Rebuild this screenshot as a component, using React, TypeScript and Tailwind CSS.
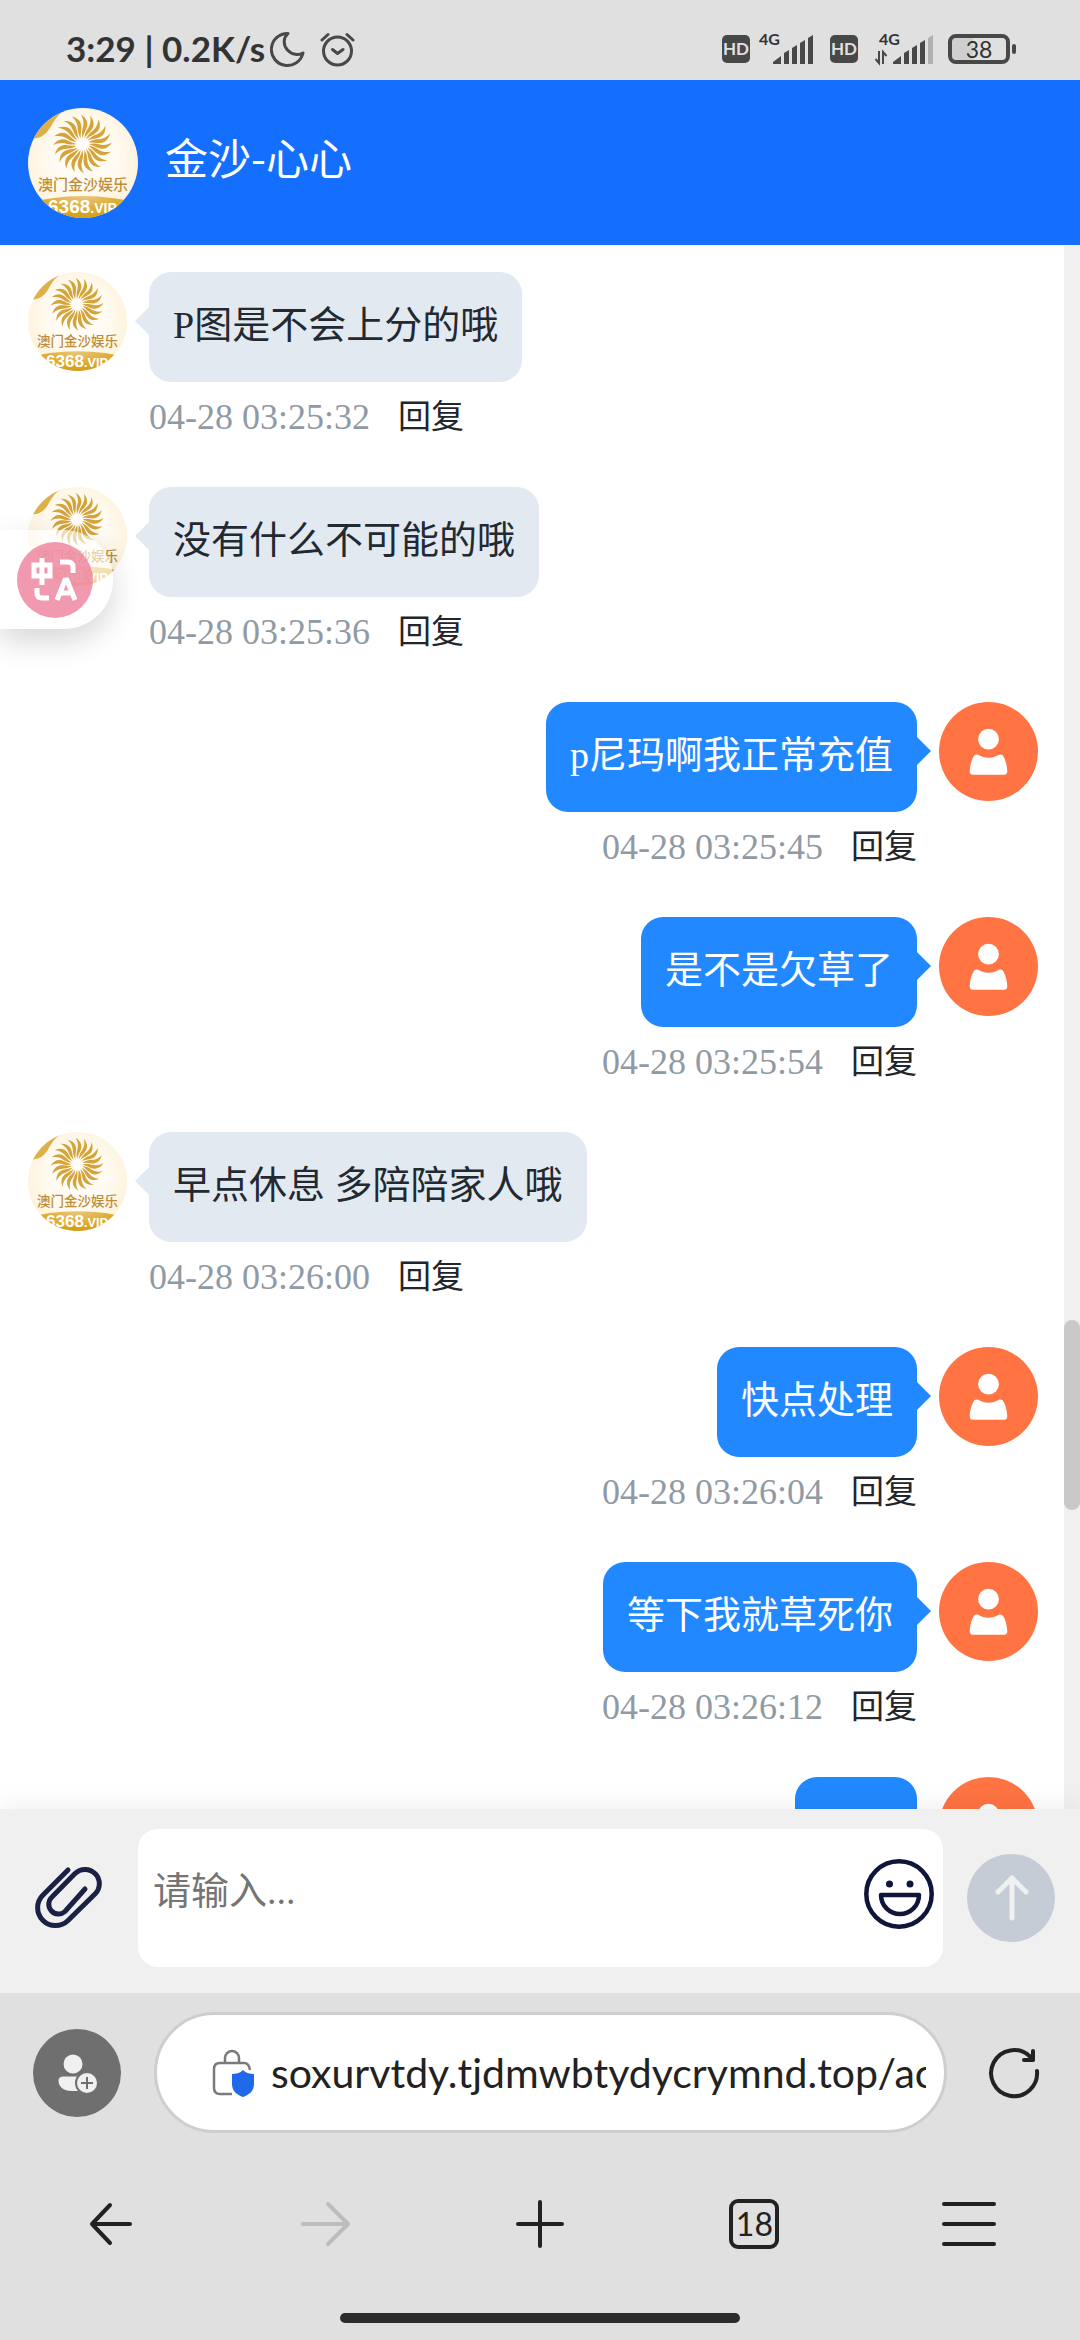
import {useState} from 'react'

const messages = [
	{id: 1, mine: false, text: 'P图是不会上分的哦', time: '04-28 03:25:32'},
	{id: 2, mine: false, text: '没有什么不可能的哦', time: '04-28 03:25:36'},
	{id: 3, mine: true, text: 'p尼玛啊我正常充值', time: '04-28 03:25:45'},
	{id: 4, mine: true, text: '是不是欠草了', time: '04-28 03:25:54'},
	{id: 5, mine: false, text: '早点休息 多陪陪家人哦', time: '04-28 03:26:00'},
	{id: 6, mine: true, text: '快点处理', time: '04-28 03:26:04'},
	{id: 7, mine: true, text: '等下我就草死你', time: '04-28 03:26:12'},
	{id: 8, mine: true, text: '', time: ''},
]

const petals = Array.from({length: 20}, (_, i) => i * 18)

const Logo = ({id, className}) => (
	<svg viewBox="0 0 110 110" className={`shrink-0 rounded-full ${className}`} aria-hidden="true">
		<defs>
			<radialGradient id={`${id}-bg`} cx="50%" cy="45%" r="60%">
				<stop offset="0" stopColor="#ffffff"/>
				<stop offset="0.55" stopColor="#fffaf0"/>
				<stop offset="1" stopColor="#fdf0d4"/>
			</radialGradient>
			<radialGradient id={`${id}-band`} cx="50%" cy="0%" r="60%">
				<stop offset="0" stopColor="#e9c680"/>
				<stop offset="0.5" stopColor="#dca61e"/>
				<stop offset="1" stopColor="#b98812"/>
			</radialGradient>
		</defs>
		<rect width="110" height="110" fill={`url(#${id}-bg)`}/>
		<path d="M0 30C10 32 17 28 22 20C27 11 31 4 42 0H0Z" fill="#deb04a"/>
		<g transform="translate(54.5 36)" fill="#d4a43a">
			{petals.map(a => (
				<path key={a} transform={`rotate(${a})`} d="M0 -6C-1 -11 -0.5 -14 0.5 -17C1.500 -21 1 -25 -1.500 -29.500C3 -26.500 5.200 -23 4.800 -19C4.200 -14.500 1.800 -12 0 -6Z"/>
			))}
		</g>
		<ellipse cx="55" cy="116" rx="80" ry="28" fill={`url(#${id}-band)`}/>
		<text x="55" y="82" fontSize="15" fontWeight="500" textAnchor="middle" fill="#bd8c35" fontFamily='"Noto Sans CJK SC", sans-serif'>澳门金沙娱乐</text>
		<text x="20" y="105" fontSize="19" fontWeight="700" fill="#fff" fontFamily='"Liberation Sans", sans-serif'>6368<tspan fontSize="14">.VIP</tspan></text>
	</svg>
)

const UserAvatar = () => (
	<svg viewBox="0 0 100 100" className="size-[99px] shrink-0 rounded-full bg-[#ff7442]" aria-hidden="true">
		<circle cx="50" cy="37.500" r="10.500" fill="#fff"/>
		<path d="M36 53.500C38 52.500 39 53 41 54C47 57 53 57 59 54C61 53 62 52.500 64 53.500C67 57 68.700 64 69 70C69 72.500 67.500 73.500 66 73.500H34C32.500 73.500 31 72.500 31 70C31.300 64 33 57 36 53.500Z" fill="#fff"/>
	</svg>
)

const Message = ({id, mine, text, time}) => (
	<li className={`flex gap-[22px] ${mine ? 'flex-row-reverse' : ''}`}>
		{mine ? <UserAvatar/> : <Logo id={`logo-${id}`} className="size-[99px]"/>}
		<div className={`flex flex-col gap-[10px] ${mine ? 'items-end' : 'items-start'}`}>
			<div className={`relative h-[110px] min-w-[122px] rounded-[22px] px-6 py-[22px] text-[38px] leading-[62px] ${mine ? 'bg-[#2288ff] text-white' : 'bg-[#e3e9f1] text-[#222930]'}`}>
				<svg viewBox="0 0 15 28" className={`absolute top-[35px] h-7 w-[15px] ${mine ? '-right-[14px] fill-[#2288ff]' : '-left-[14px] -scale-x-100 fill-[#e3e9f1]'}`} aria-hidden="true">
					<path d="M0 0H1L15 14L1 28H0Z"/>
				</svg>
				{text}
			</div>
			<div className="flex h-[50px] items-center gap-7 leading-[50px]">
				<time className="text-4xl text-[#8f9aa5]">{time}</time>
				{time && <button className="text-[33px] leading-[50px] text-[#222529]">回复</button>}
			</div>
		</div>
	</li>
)

const Bars = ({weak = false}) => (
	<g fill="#484848">
		<path d="M0 29V27L8 21V29Z"/>
		<path d="M11 29V18L16 15V29Z"/>
		<path d="M19 29V13L24 10V29Z"/>
		<path d="M27 29V8L32 5V29Z"/>
		<path d="M35 29V3L40 0V29Z" fill={weak ? '#b0b0b0' : '#484848'}/>
	</g>
)

const HD = () => (
	<span className="flex size-7 items-center justify-center rounded-[5px] bg-[#484848] text-[17px] font-bold text-[#e0e0e0]">HD</span>
)

const StatusBar = () => (
	<div className="flex h-20 shrink-0 items-center justify-between bg-[#e0e0e0] pt-[18px] pr-16 pl-[66px] font-['Lato',sans-serif]">
		<div className="flex items-center">
			<span className="w-[204px] pb-[2px] text-[35px] font-bold whitespace-nowrap text-[#333]">3:29 | 0.2K/s</span>
			<svg viewBox="0 0 36 36" className="size-9" fill="none" stroke="#484848" strokeWidth="3" strokeLinejoin="round" aria-hidden="true">
				<path d="M18 2.500A16 16 0 1 0 33 22C29 24.500 22 24 17.500 19C13 14 13 7 18 2.500Z"/>
			</svg>
			<svg viewBox="0 0 36 36" className="ml-[14px] size-9" fill="none" stroke="#484848" strokeWidth="3" strokeLinecap="round" strokeLinejoin="round" aria-hidden="true">
				<circle cx="17.500" cy="20" r="14"/>
				<path d="M12.500 18.500L17.500 22.500L23 18.500M2 9L8 3.500M33 9L27 3.500"/>
			</svg>
		</div>
		<div className="flex items-center">
			<HD/>
			<svg viewBox="0 0 56 44" className="mr-4 ml-2 h-11 w-14" aria-hidden="true">
				<text x="1" y="18" fontSize="16" fontWeight="700" fill="#333">4G</text>
				<g transform="translate(15 8)"><Bars/></g>
			</svg>
			<HD/>
			<svg viewBox="0 0 60 44" className="mr-[14px] ml-4 h-11 w-[60px]" aria-hidden="true">
				<text x="5" y="18" fontSize="16" fontWeight="700" fill="#333">4G</text>
				<path d="M5 24V36L1.500 32M9 37V25L12.500 29" fill="none" stroke="#484848" strokeWidth="2"/>
				<g transform="translate(19 8)"><Bars weak/></g>
			</svg>
			<span className="flex h-[30px] w-[62px] items-center justify-center rounded-[8px] border-4 border-[#484848] bg-linear-to-r from-[#cfcfcf] from-38% to-[#e0e0e0] to-38% text-[23px] text-[#333]">38</span>
			<span className="ml-[2px] h-[10px] w-1 rounded-full bg-[#484848]"/>
		</div>
	</div>
)

const Translate = () => (
	<button aria-label="翻译" className="absolute top-[285px] left-0 flex h-[99px] w-[113px] items-center rounded-r-full bg-white/60 pl-[17px] shadow-[0_12px_30px_rgba(0,0,0,0.16)]">
		<svg viewBox="0 0 76 76" className="size-[76px]" fill="none" stroke="#fff" strokeWidth="5" aria-hidden="true">
			<circle cx="38" cy="38" r="38" fill="#ee819b" fillOpacity="0.8" stroke="none"/>
			<path d="M17 23H33V34H17ZM25 16V43"/>
			<path d="M43 20H51Q56 20 56 25V31M20 46V51Q20 56 25 56H32"/>
			<path d="M40 58L48 38H50L58 58M43 51H55"/>
		</svg>
	</button>
)

const Composer = () => {
	const [draft, setDraft] = useState('')
	return (
		<form onSubmit={(e) => e.preventDefault()} className="relative flex h-[184px] shrink-0 items-start bg-[#f0f0f0] pt-5 pr-[25px] shadow-[0_0_30px_rgba(0,0,0,0.08)]">
			<button type="button" aria-label="附件" className="flex h-[138px] w-[138px] items-center justify-center">
				<svg viewBox="0 0 70 66" className="h-[66px] w-[70px]" fill="none" stroke="#1b2045" strokeWidth="5" strokeLinecap="round" aria-hidden="true">
					<path d="M34 5L9 30A17.500 17.500 0 0 0 34 55.500L61 29A14 14 0 0 0 41 8.500L18 32A9 9 0 0 0 31 46.500L51 24"/>
				</svg>
			</button>
			<div className="flex h-[138px] flex-1 items-center rounded-[20px] bg-white pr-[9px]">
				<textarea aria-label="请输入" value={draft} onChange={(e) => setDraft(e.target.value)} placeholder="请输入..." className="h-full min-w-0 flex-1 resize-none overflow-hidden py-[35px] pl-[15px] text-[38px] leading-[55px] outline-none placeholder:text-[#757575]"/>
				<button type="button" aria-label="表情" className="mb-2">
					<svg viewBox="0 0 70 70" className="size-[70px]" fill="none" stroke="#10153a" strokeWidth="4.500" strokeLinejoin="round" aria-hidden="true">
						<circle cx="35" cy="35" r="32.700"/>
						<path d="M17 36H55C55 47 46 55 36 55S17 47 17 36Z"/>
						<circle cx="25.500" cy="25" r="3.500" fill="#10153a" stroke="none"/>
						<circle cx="46" cy="25" r="3.500" fill="#10153a" stroke="none"/>
					</svg>
				</button>
			</div>
			<button aria-label="发送" className="mt-[25px] ml-6 flex size-[88px] items-center justify-center rounded-full bg-[#c5ccd5]">
				<svg viewBox="0 0 88 88" className="size-[88px]" fill="none" stroke="#f0f0f0" strokeWidth="5" strokeLinecap="round" strokeLinejoin="round" aria-hidden="true">
					<path d="M45 64V24M31 38L45 24L59 38"/>
				</svg>
			</button>
		</form>
	)
}

const AddressBar = () => (
	<div className="flex items-center pt-[19px] pr-10 pl-[33px]">
		<button aria-label="账号" className="size-[88px] shrink-0 rounded-full bg-[#6f6f6f]">
			<svg viewBox="0 0 88 88" className="size-[88px]" aria-hidden="true">
				<circle cx="40" cy="35" r="9.500" fill="#f0f0f0"/>
				<path d="M30 47.500H48V62H39C30 62 25.500 57 25.500 52Q25.500 47.500 30 47.500Z" fill="#f0f0f0"/>
				<circle cx="54" cy="54" r="11" fill="#f0f0f0" stroke="#6f6f6f" strokeWidth="2"/>
				<path d="M54 48V60M48 54H60" stroke="#6f6f6f" strokeWidth="2"/>
			</svg>
		</button>
		<div className="ml-[33px] flex h-[121px] min-w-0 flex-1 items-center rounded-full border-[3px] border-[#cecece] bg-white pr-[18px] pl-[54px]">
			<svg viewBox="0 0 44 48" className="h-12 w-11 shrink-0" fill="none" aria-hidden="true">
				<path d="M21 45H9Q3 45 3 39V20Q3 14 9 14H33Q38 14 39 21M14 13V9A7 7 0 0 1 28 9V13" stroke="#7a7a7a" strokeWidth="2.500"/>
				<path d="M32 21C35 24 39 25 43 25V35C43 42 38 46 32 48C26 46 21 42 21 35V25C25 25 29 24 32 21Z" fill="#2169eb"/>
			</svg>
			<input aria-label="网址" defaultValue="soxurvtdy.tjdmwbtydycrymnd.top/ac" className="ml-4 h-[60px] min-w-0 flex-1 font-['Lato',sans-serif] text-[41px] text-[#222] outline-none"/>
		</div>
		<button aria-label="刷新" className="ml-[41px]">
			<svg viewBox="0 0 52 52" className="size-[52px]" fill="none" stroke="#222" strokeWidth="4" strokeLinecap="round" strokeLinejoin="round" aria-hidden="true">
				<path d="M49 24A23 23 0 1 1 42 9.500L45 13M45 4V13H36"/>
			</svg>
		</button>
	</div>
)

const navItem = 'flex h-[60px] items-center justify-center'

const BrowserBar = () => (
	<footer className="relative flex h-[347px] shrink-0 flex-col bg-[#e0e0e0]">
		<AddressBar/>
		<nav className="mt-[61px] grid grid-cols-5 px-1">
			<button aria-label="后退" className={navItem}>
				<svg viewBox="0 0 50 50" className="size-[50px]" fill="none" stroke="#222" strokeWidth="4" strokeLinecap="round" strokeLinejoin="round"><path d="M44 25H6M24 6L6 25L24 44"/></svg>
			</button>
			<button aria-label="前进" disabled className={navItem}>
				<svg viewBox="0 0 50 50" className="size-[50px]" fill="none" stroke="#bdbdbd" strokeWidth="4" strokeLinecap="round" strokeLinejoin="round"><path d="M2 25H47M27 5L47 25L27 45"/></svg>
			</button>
			<button aria-label="新建标签页" className={navItem}>
				<svg viewBox="0 0 50 50" className="size-[50px]" fill="none" stroke="#222" strokeWidth="4" strokeLinecap="round"><path d="M25 3V47M3 25H47"/></svg>
			</button>
			<button aria-label="标签页" className={navItem}>
				<span className="flex size-[50px] items-center justify-center rounded-[9px] border-4 border-[#222] font-['Lato',sans-serif] text-[32px] leading-none text-[#222]">18</span>
			</button>
			<button aria-label="菜单" className={navItem}>
				<svg viewBox="0 0 56 50" className="h-[50px] w-14" fill="none" stroke="#222" strokeWidth="4" strokeLinecap="round"><path d="M3 5H53M3 25H53M3 45H53"/></svg>
			</button>
		</nav>
		<div className="mx-auto mt-auto mb-[17px] h-[10px] w-[37%] rounded-full bg-[#2c2c2c]"/>
	</footer>
)

const App = () => (
	<div className="flex h-screen flex-col overflow-hidden bg-white font-['Liberation_Serif','Noto_Sans_CJK_SC',serif]">
		<StatusBar/>
		<header className="flex h-[165px] shrink-0 items-center gap-[27px] bg-[#146fff] px-7">
			<Logo id="header" className="size-[110px]"/>
			<h1 className="pb-3 font-['Noto_Sans_CJK_SC',sans-serif] text-[43px] text-white">金沙-心心</h1>
		</header>
		<main className="relative flex min-h-0 flex-1">
			<ul className="flex flex-1 flex-col gap-[45px] overflow-hidden pt-[27px] pr-[26px] pl-7">
				{messages.map(m => <Message key={m.id} {...m}/>)}
			</ul>
			<div className="w-4 shrink-0 bg-[#f0f0f0] pt-[1075px]">
				<div className="h-[190px] rounded-full bg-[#c9c9c9]"/>
			</div>
			<Translate/>
		</main>
		<Composer/>
		<BrowserBar/>
	</div>
)

export default App
